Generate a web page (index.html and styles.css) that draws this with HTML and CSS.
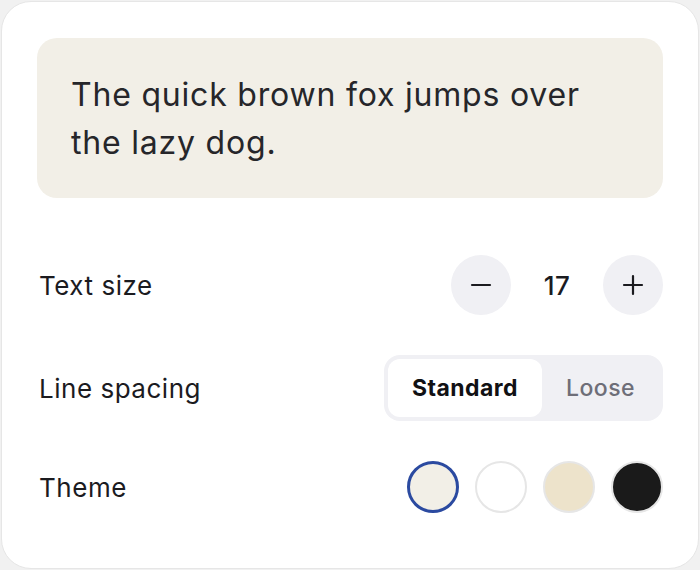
FILE: index.html
```html
<!DOCTYPE html>
<html>
<head>
<meta charset="utf-8">
<link rel="stylesheet" href="styles.css">
</head>
<body>
<div class="card">
  <div class="preview">The quick brown fox jumps over the lazy dog.</div>
  <div class="controls">
    <div class="row">
      <span class="label">Text size</span>
      <div class="stepper">
        <button class="step" aria-label="Decrease">
          <svg width="22" height="22" viewBox="0 0 22 22"><path d="M2 11h18" stroke="#1b1b1f" stroke-width="2.2" stroke-linecap="round"/></svg>
        </button>
        <span class="value">17</span>
        <button class="step" aria-label="Increase">
          <svg width="22" height="22" viewBox="0 0 22 22"><path d="M2 11h18M11 2v18" stroke="#1b1b1f" stroke-width="2.2" stroke-linecap="round"/></svg>
        </button>
      </div>
    </div>
    <div class="row">
      <span class="label">Line spacing</span>
      <div class="segmented">
        <span class="seg active">Standard</span>
        <span class="seg">Loose</span>
      </div>
    </div>
    <div class="row">
      <span class="label">Theme</span>
      <div class="swatches">
        <span class="swatch paper selected"></span>
        <span class="swatch white"></span>
        <span class="swatch sepia"></span>
        <span class="swatch dark"></span>
      </div>
    </div>
  </div>
</div>
</body>
</html>
```

FILE: styles.css
```css
* { box-sizing: border-box; }
html, body {
  margin: 0;
  padding: 0;
  background: #f1f1f1;
}
body {
  font-family: "Inter", "Liberation Sans", sans-serif;
  color: #1b1b1f;
}
.card {
  margin: 1px;
  width: 698px;
  height: 568px;
  background: #ffffff;
  border: 1px solid #e6e6e6;
  border-radius: 30px;
  padding: 36px 35px;
}
.preview {
  background: #f2efe7;
  border-radius: 20px;
  padding: 33px 30px 31px 34px;
  font-size: 32px;
  line-height: 48px;
  letter-spacing: 0.025em;
  color: #26262a;
}
.controls {
  margin-top: 57px;
  display: flex;
  flex-direction: column;
  gap: 40px;
}
.row {
  display: flex;
  align-items: center;
  justify-content: space-between;
}
.label {
  font-size: 26px;
  letter-spacing: 0.02em;
  padding-left: 2px;
}
.stepper {
  display: flex;
  align-items: center;
  gap: 16px;
}
.step {
  width: 60px;
  height: 60px;
  border-radius: 50%;
  border: none;
  background: #f0f0f4;
  display: flex;
  align-items: center;
  justify-content: center;
  padding: 0;
}
.step svg { display: block; }
.value {
  min-width: 60px;
  text-align: center;
  font-size: 26px;
  font-weight: 500;
  letter-spacing: 0.02em;
}
.segmented {
  display: flex;
  background: #f0f0f4;
  border-radius: 16px;
  padding: 4px;
  height: 66px;
}
.seg {
  display: flex;
  align-items: center;
  justify-content: center;
  padding: 0 24px;
  font-size: 23px;
  font-weight: 500;
  letter-spacing: 0.02em;
  color: #6e6e78;
  border-radius: 12px;
}
.seg.active {
  background: #ffffff;
  color: #111114;
  font-weight: 700;
}
.swatches {
  display: flex;
  gap: 16px;
}
.swatch {
  width: 52px;
  height: 52px;
  border-radius: 50%;
  border: 2px solid #e6e6e6;
}
.swatch.paper { background: #f2efe7; }
.swatch.white { background: #ffffff; }
.swatch.sepia { background: #ede3cb; }
.swatch.dark { background: #1a1a1a; }
.swatch.selected { border: 3.5px solid #2b4aa0; }
```
